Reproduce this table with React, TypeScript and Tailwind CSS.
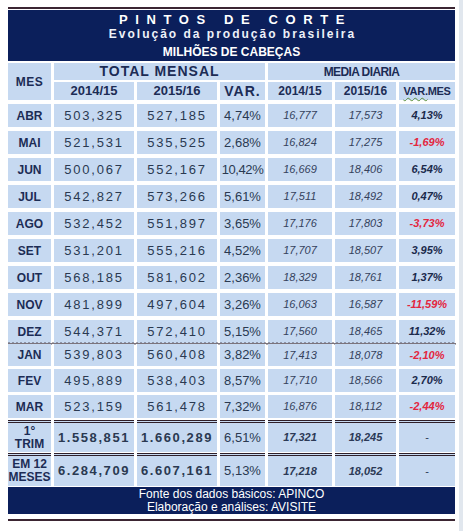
import React from 'react';

type Row = {
  mes: string;
  a: string;
  b: string;
  v: string;
  m1: string;
  m2: string;
  vm: string;
};

const rows1: Row[] = [
  { mes: 'ABR', a: '503,325', b: '527,185', v: '4,74%', m1: '16,777', m2: '17,573', vm: '4,13%' },
  { mes: 'MAI', a: '521,531', b: '535,525', v: '2,68%', m1: '16,824', m2: '17,275', vm: '-1,69%' },
  { mes: 'JUN', a: '500,067', b: '552,167', v: '10,42%', m1: '16,669', m2: '18,406', vm: '6,54%' },
  { mes: 'JUL', a: '542,827', b: '573,266', v: '5,61%', m1: '17,511', m2: '18,492', vm: '0,47%' },
  { mes: 'AGO', a: '532,452', b: '551,897', v: '3,65%', m1: '17,176', m2: '17,803', vm: '-3,73%' },
  { mes: 'SET', a: '531,201', b: '555,216', v: '4,52%', m1: '17,707', m2: '18,507', vm: '3,95%' },
  { mes: 'OUT', a: '568,185', b: '581,602', v: '2,36%', m1: '18,329', m2: '18,761', vm: '1,37%' },
  { mes: 'NOV', a: '481,899', b: '497,604', v: '3,26%', m1: '16,063', m2: '16,587', vm: '-11,59%' },
  { mes: 'DEZ', a: '544,371', b: '572,410', v: '5,15%', m1: '17,560', m2: '18,465', vm: '11,32%' },
];

const rows2: Row[] = [
  { mes: 'JAN', a: '539,803', b: '560,408', v: '3,82%', m1: '17,413', m2: '18,078', vm: '-2,10%' },
  { mes: 'FEV', a: '495,889', b: '538,403', v: '8,57%', m1: '17,710', m2: '18,566', vm: '2,70%' },
  { mes: 'MAR', a: '523,159', b: '561,478', v: '7,32%', m1: '16,876', m2: '18,112', vm: '-2,44%' },
];

const cols = 'grid grid-cols-[43px_80px_80px_45px_64px_61px_56px] gap-x-[3px]';
const cell = 'flex items-center justify-center bg-[#c6d9f1] whitespace-nowrap';

function DataRow({ r, h }: { r: Row; h: string }) {
  const neg = r.vm.startsWith('-');
  return (
    <div className={`${cols} ${h}`}>
      <div className={`${cell} text-[12px] font-bold text-[#1c2c55]`}>{r.mes}</div>
      <div className={`${cell} text-[13px] tracking-[1.8px] text-[#2a3951]`}>{r.a}</div>
      <div className={`${cell} text-[13px] tracking-[1.8px] text-[#2a3951]`}>{r.b}</div>
      <div className={`${cell} text-[13px] text-[#2a3951] ${r.v.length > 5 ? 'tracking-[-0.4px]' : ''}`}>{r.v}</div>
      <div className={`${cell} text-[11px] italic text-[#34415c]`}>{r.m1}</div>
      <div className={`${cell} text-[11px] italic text-[#34415c]`}>{r.m2}</div>
      <div className={`${cell} text-[11px] font-bold italic ${neg ? 'text-[#e3263f]' : 'text-[#1b2a4c]'}`}>{r.vm}</div>
    </div>
  );
}

function SumRow({ label, r, h }: { label: React.ReactNode; r: Row; h: string }) {
  const top = 'border-t-[3px] border-double border-[#2e1f2a]';
  return (
    <div className={`${cols} ${h}`}>
      <div className={`${cell} ${top} flex-col text-[12px] font-bold leading-[13px] text-[#1c2c55]`}>{label}</div>
      <div className={`${cell} ${top} text-[13px] font-bold tracking-[1.6px] text-[#2a3951]`}>{r.a}</div>
      <div className={`${cell} ${top} text-[13px] font-bold tracking-[1.6px] text-[#2a3951]`}>{r.b}</div>
      <div className={`${cell} ${top} text-[13px] text-[#2a3951]`}>{r.v}</div>
      <div className={`${cell} ${top} text-[11px] font-bold italic text-[#2c3a56]`}>{r.m1}</div>
      <div className={`${cell} ${top} text-[11px] font-bold italic text-[#2c3a56]`}>{r.m2}</div>
      <div className={`${cell} ${top} text-[11px] text-[#2c3a56]`}>{r.vm}</div>
    </div>
  );
}

function Wave() {
  let d = 'M0 1.5';
  for (let x = 0; x < 447; x += 4) d += ` Q${x + 1} 0 ${x + 2} 1.5 T${x + 4} 1.5`;
  return (
    <div className="h-[2px]">
      <svg width="447" height="4" className="-mt-[1px] block overflow-visible">
        <path d={d} fill="none" stroke="#2e2230" strokeWidth="1" />
      </svg>
    </div>
  );
}

export default function App() {
  return (
    <div className="flex h-[531px] w-[463px] bg-white font-['Liberation_Sans',Arial,sans-serif]">
      <div className="w-[459px] pl-[8px] pt-[7px]">
        <div className="w-[447px]">
          <div className="h-[2px] bg-[#3b2532]" />

          {/* titulo */}
          <div className="mt-[1px] flex h-[51px] flex-col items-center bg-[#0b1f5b] pt-[2px] text-white">
            <div className="h-[15px] pl-[8px] text-[13px] font-bold leading-[15px] tracking-[7.6px]">PINTOS DE CORTE</div>
            <div className="h-[14px] pl-[2px] text-[12px] font-bold leading-[14px] tracking-[2px] text-[#eef1f8]">
              Evolução da produção brasileira
            </div>
            <div className="mt-[4px] h-[14px] text-[12px] font-bold leading-[14px]">MILHÕES DE CABEÇAS</div>
          </div>

          {/* cabecalho */}
          <div className={`${cols} mt-[2px] grid-rows-[17px_18px] gap-y-[2px] font-bold text-[#1c2c55]`}>
            <div className={`${cell} row-span-2 text-[12px] tracking-[0.5px]`}>MES</div>
            <div className={`${cell} col-span-3 text-[14px] tracking-[1px]`}>TOTAL MENSAL</div>
            <div className={`${cell} col-span-3 text-[12px] tracking-[-0.6px]`}>MEDIA DIARIA</div>
            <div className={`${cell} text-[13px]`}>2014/15</div>
            <div className={`${cell} text-[13px]`}>2015/16</div>
            <div className={`${cell} text-[14px] tracking-[1px]`}>VAR.</div>
            <div className={`${cell} text-[12px]`}>2014/15</div>
            <div className={`${cell} text-[12px]`}>2015/16</div>
            <div className={`${cell} text-[11px] tracking-[-0.3px]`}>
              <span className="underline decoration-[#5b8f3a] decoration-wavy decoration-1 underline-offset-2">VAR.</span>MES
            </div>
          </div>

          <div className="mt-[4px] flex flex-col gap-[4px]">
            {rows1.map((r) => (
              <DataRow key={r.mes} r={r} h="h-[23px]" />
            ))}
          </div>

          <Wave />

          <div className="flex flex-col gap-[3px]">
            {rows2.map((r, i) => (
              <DataRow key={r.mes} r={r} h={i === 0 ? 'h-[22px]' : 'h-[23px]'} />
            ))}
          </div>

          <div className="mt-[2px] flex flex-col gap-[1px]">
            <SumRow
              h="h-[32px]"
              label={
                <>
                  <span>1°</span>
                  <span>TRIM</span>
                </>
              }
              r={{ mes: '', a: '1.558,851', b: '1.660,289', v: '6,51%', m1: '17,321', m2: '18,245', vm: '-' }}
            />
            <SumRow
              h="h-[33px]"
              label={
                <>
                  <span>EM 12</span>
                  <span>MESES</span>
                </>
              }
              r={{ mes: '', a: '6.284,709', b: '6.607,161', v: '5,13%', m1: '17,218', m2: '18,052', vm: '-' }}
            />
          </div>

          {/* rodape */}
          <div className="mt-[1px] flex h-[27px] flex-col items-center justify-center bg-[#0b1f5b] text-[12px] leading-[12.5px] text-white">
            <div>Fonte dos dados básicos: APINCO</div>
            <div>Elaboração e análises: AVISITE</div>
          </div>

          <div className="mt-[5px] h-[2px] bg-[#3b2532]" />
        </div>
      </div>
      <div className="flex-1 bg-[#e1e7ee]" />
    </div>
  );
}
